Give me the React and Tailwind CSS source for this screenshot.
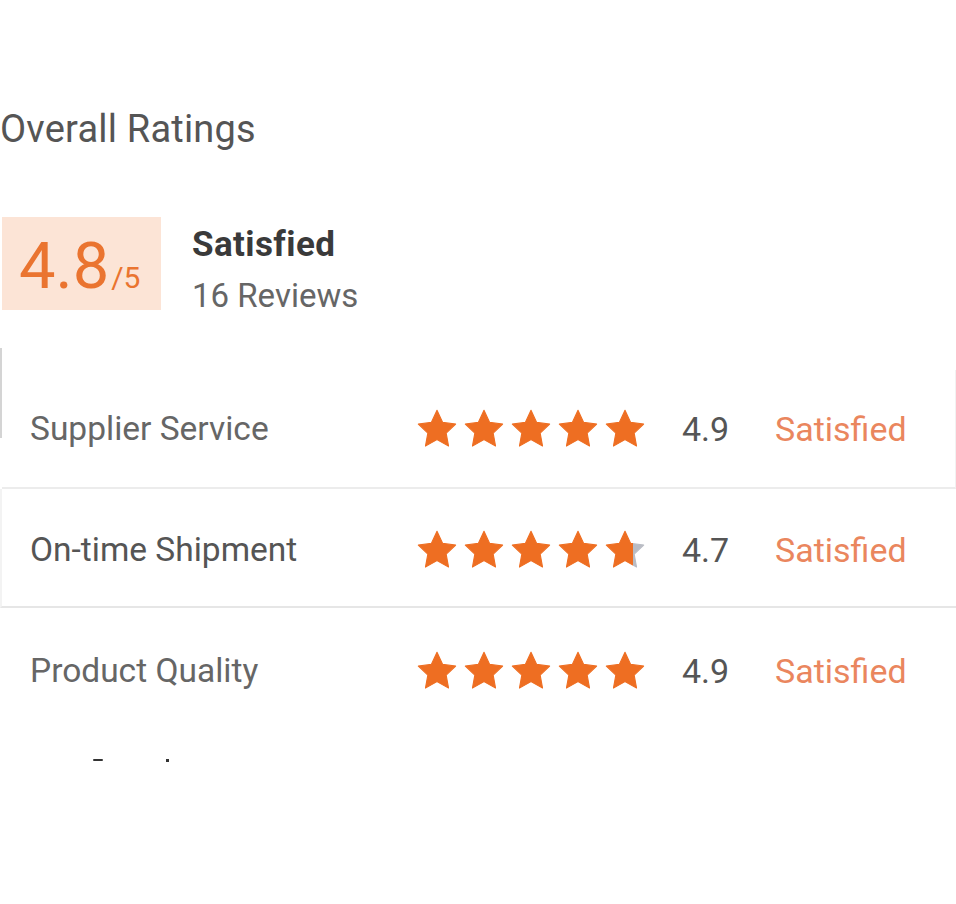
import React from "react";

const Star = ({ fill = 1, id }) => (
  <svg width="44" height="44" viewBox="0 0 24 24" className="block">
    <defs>
      <linearGradient id={id} x1="0" x2="1" y1="0" y2="0">
        <stop offset={fill} stopColor="#ee6e22" />
        <stop offset={fill} stopColor="#b9bcc4" />
      </linearGradient>
    </defs>
    <path
      d="M12 1.8l3.1 6.6 7.1.9-5.2 4.9 1.3 7.1L12 17.8l-6.3 3.5 1.3-7.1-5.2-4.9 7.1-.9z"
      fill={`url(#${id})`}
      stroke={`url(#${id})`}
      strokeWidth="0.6"
      strokeLinejoin="round"
    />
  </svg>
);

const rows = [
  { label: "Supplier Service", score: "4.9", fills: [1, 1, 1, 1, 1] },
  { label: "On-time Shipment", score: "4.7", fills: [1, 1, 1, 1, 0.72] },
  { label: "Product Quality", score: "4.9", fills: [1, 1, 1, 1, 1] },
];

export default function App() {
  return (
    <div
      className="w-[956px] h-[904px] bg-white overflow-hidden flex flex-col"
      style={{ fontFamily: "Roboto, 'Liberation Sans', sans-serif" }}
    >
      <div className="pt-[107px] text-[38px] leading-[44px] text-[#555] tracking-[0.2px]">
        Overall Ratings
      </div>

      <div className="mt-[66px] flex items-start">
        <div className="ml-[2px] w-[159px] h-[93px] bg-[#fce4d6] flex items-baseline pl-[17px] pt-[17px]">
          <span className="text-[65px] leading-[64px] text-[#ea7430]">4.8</span>
          <span className="text-[30px] leading-[29px] text-[#ea7430] ml-[2px]">/5</span>
        </div>
        <div className="ml-[31px] mt-[8px] flex flex-col">
          <span className="text-[35px] leading-[40px] font-bold text-[#3a3a3a] tracking-[0.4px]">Satisfied</span>
          <span className="text-[33px] leading-[40px] text-[#666] mt-[11px]">16 Reviews</span>
        </div>
      </div>

      <div className="mt-[32px] flex">
        <div className="w-[2px] h-[90px] bg-[#d4d4d4] shrink-0" />
        <div className="flex-1 flex flex-col pt-[22px]">
          {rows.map((r, i) => (
            <div
              key={r.label}
              className={
                i === 0
                  ? "h-[119px] flex items-center border-r border-[#f2f2f2] border-b-2 border-b-[#ececec] pr-[1px]"
                  : i === 1
                  ? "h-[119px] -ml-[2px] pt-[5px] flex items-center border-l-2 border-[#f3f3f3] border-b-2 border-b-[#e6e6e6]"
                  : "h-[121px] pt-[5px] flex items-center"
              }
            >
              <div
                className={
                  "w-[413px] shrink-0 text-[33.5px] leading-[36px] pl-[28px] " +
                  (i === 1 ? "text-[#555]" : "text-[#666]")
                }
              >
                {r.label}
              </div>
              <div className="flex gap-[3px]">
                {r.fills.map((f, j) => (
                  <Star key={j} fill={f} id={`s${i}${j}`} />
                ))}
              </div>
              <div className="ml-[35px] w-[93px] text-[34px] leading-[36px] text-[#555]">{r.score}</div>
              <div className="text-[34px] leading-[36px] text-[#ea865e]">Satisfied</div>
            </div>
          ))}
        </div>
      </div>

      <div className="mt-[30px] flex items-start h-[3px]">
        <div className="ml-[93px] w-[10px] h-[2px] bg-[#333] rounded-full" />
        <div className="ml-[63px] w-[3px] h-[3px] bg-[#333]" />
      </div>
    </div>
  );
}
